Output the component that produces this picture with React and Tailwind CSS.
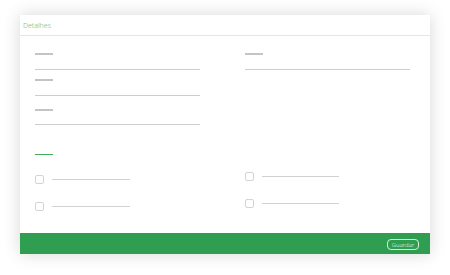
import React from 'react';

const Label = ({ className = '' }) => (
  <div className={`h-[2px] w-[18px] bg-[#c4c4c4] ${className}`} />
);

const Input = ({ className = '' }) => (
  <div className={`h-px w-full bg-[#cdcdcd] ${className}`} />
);

const Check = ({ className = '', lineW = 'w-[78px]' }) => (
  <div className={`flex items-center ${className}`}>
    <div className="h-[9px] w-[9px] rounded-[2px] border border-[#d4d4d4] bg-white" />
    <div className={`ml-[8px] h-px bg-[#d2d2d2] ${lineW}`} />
  </div>
);

export default function App() {
  return (
    <div className="h-[275px] w-[450px] bg-white pl-[20px] pt-[15px]" style={{ fontFamily: '"Noto Sans", "Liberation Sans", sans-serif' }}>
      <div className="flex h-[239px] w-[410px] flex-col bg-white shadow-[0_0_16px_rgba(0,0,0,0.16)]">
        {/* header */}
        <div className="flex h-[21px] items-center border-b border-[#e6e6e6] pl-[3px]">
          <span className="text-[7px] font-light leading-none text-[#62c276]">Detalhes</span>
        </div>

        {/* body */}
        <div className="flex-1 pl-[15px] pr-[20px]">
          <div className="grid grid-cols-[165px_165px] gap-x-[45px]">
            <div>
              <Label className="mt-[17px]" />
              <Input className="mt-[14px]" />
              <Label className="mt-[9px]" />
              <Input className="mt-[14px]" />
              <Label className="mt-[13px]" />
              <Input className="mt-[13px]" />
            </div>
            <div>
              <Label className="mt-[17px]" />
              <Input className="mt-[14px]" />
            </div>
          </div>

          <div className="mt-[29px] h-px w-[18px] bg-[#3fae5a]" />

          <div className="grid grid-cols-[165px_165px] gap-x-[45px]">
            <div>
              <Check className="mt-[20px]" />
              <Check className="mt-[18px]" />
            </div>
            <div>
              <Check className="mt-[17px]" lineW="w-[77px]" />
              <Check className="mt-[18px]" lineW="w-[77px]" />
            </div>
          </div>
        </div>

        {/* footer */}
        <div className="flex h-[21px] items-center justify-end bg-[#2f9e50] pr-[11px]">
          <button className="mt-[2px] flex h-[11px] w-[32px] items-center justify-center rounded-[4px] border border-[#d8f0dd] text-[6px] font-light leading-none text-[#e8f7eb]">
            Guardar
          </button>
        </div>
      </div>
    </div>
  );
}
